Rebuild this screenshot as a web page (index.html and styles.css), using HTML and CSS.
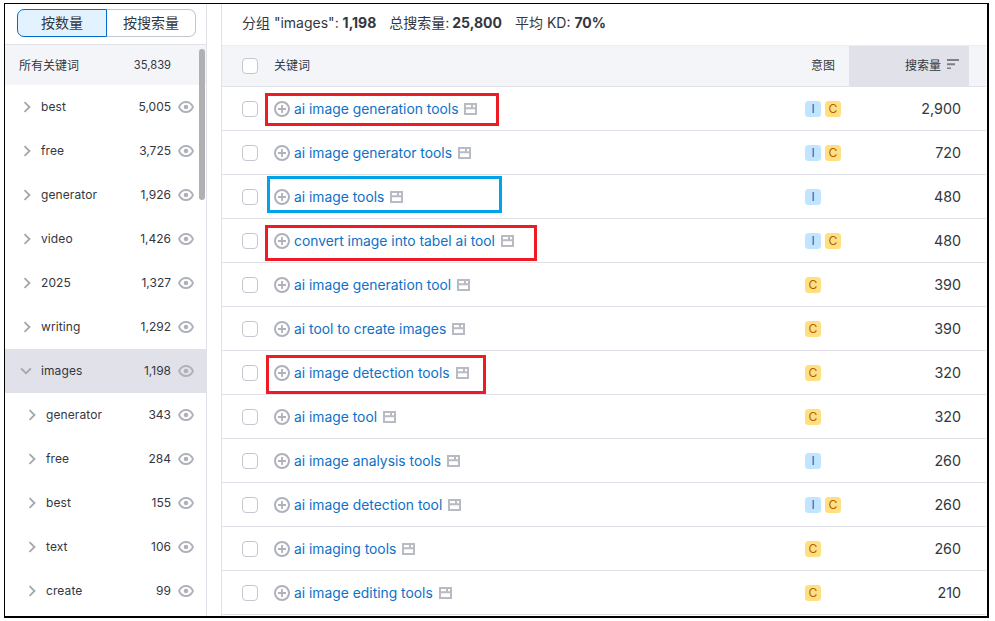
FILE: index.html
```html
<!DOCTYPE html>
<html lang="zh">
<head>
<meta charset="utf-8">
<title>分组 images</title>
<link rel="stylesheet" href="styles.css">
</head>
<body>
<svg class="defs" width="0" height="0">
  <symbol id="eye" viewBox="0 0 16 12"><path d="M1 6C2.500 2.800 5 1 8 1s5.500 1.800 7 5c-1.500 3.200-4 5-7 5S2.500 9.200 1 6z" fill="none" stroke="currentColor" stroke-width="1.800"/><circle cx="8" cy="6" r="2.300" fill="currentColor"/></symbol>
  <symbol id="right" viewBox="0 0 8 12"><path d="M1.500 1.200 6.500 6l-5 4.800" fill="none" stroke="currentColor" stroke-width="1.800"/></symbol>
  <symbol id="down" viewBox="0 0 12 8"><path d="M1.200 1.500 6 6.300l4.800-4.800" fill="none" stroke="currentColor" stroke-width="1.800"/></symbol>
  <symbol id="plus" viewBox="0 0 16 16"><circle cx="8" cy="8" r="7" fill="none" stroke="currentColor" stroke-width="2"/><path d="M8 4v8M4 8h8" fill="none" stroke="currentColor" stroke-width="1.800"/></symbol>
  <symbol id="serp" viewBox="0 0 13 12"><path d="M1 1h11v10H1zM1 5.200h11M8 1v4.200" fill="none" stroke="currentColor" stroke-width="2"/></symbol>
  <symbol id="sort" viewBox="0 0 12 10"><path d="M0 1h12M0 5.200h8M0 9.400h4" fill="none" stroke="currentColor" stroke-width="2"/></symbol>
</svg>
<div class="frame">
  <aside class="side">
    <div class="toggle-wrap">
      <div class="toggle">
        <span class="tab tab-on">按数量</span>
        <span class="tab">按搜索量</span>
      </div>
    </div>
    <div class="groups">
      <div class="scroll-thumb"></div>
      <div class="all"><span class="all-label">所有关键词</span><span class="all-num">35,839</span></div>
      <div class="group"><svg class="chev"><use href="#right"/></svg><span class="g-name">best</span><span class="g-num">5,005</span><svg class="eye"><use href="#eye"/></svg></div>
      <div class="group"><svg class="chev"><use href="#right"/></svg><span class="g-name">free</span><span class="g-num">3,725</span><svg class="eye"><use href="#eye"/></svg></div>
      <div class="group"><svg class="chev"><use href="#right"/></svg><span class="g-name">generator</span><span class="g-num">1,926</span><svg class="eye"><use href="#eye"/></svg></div>
      <div class="group"><svg class="chev"><use href="#right"/></svg><span class="g-name">video</span><span class="g-num">1,426</span><svg class="eye"><use href="#eye"/></svg></div>
      <div class="group"><svg class="chev"><use href="#right"/></svg><span class="g-name">2025</span><span class="g-num">1,327</span><svg class="eye"><use href="#eye"/></svg></div>
      <div class="group"><svg class="chev"><use href="#right"/></svg><span class="g-name">writing</span><span class="g-num">1,292</span><svg class="eye"><use href="#eye"/></svg></div>
      <div class="group group-on"><svg class="chev-down"><use href="#down"/></svg><span class="g-name">images</span><span class="g-num">1,198</span><svg class="eye"><use href="#eye"/></svg></div>
      <div class="group sub"><svg class="chev"><use href="#right"/></svg><span class="g-name">generator</span><span class="g-num">343</span><svg class="eye"><use href="#eye"/></svg></div>
      <div class="group sub"><svg class="chev"><use href="#right"/></svg><span class="g-name">free</span><span class="g-num">284</span><svg class="eye"><use href="#eye"/></svg></div>
      <div class="group sub"><svg class="chev"><use href="#right"/></svg><span class="g-name">best</span><span class="g-num">155</span><svg class="eye"><use href="#eye"/></svg></div>
      <div class="group sub"><svg class="chev"><use href="#right"/></svg><span class="g-name">text</span><span class="g-num">106</span><svg class="eye"><use href="#eye"/></svg></div>
      <div class="group sub"><svg class="chev"><use href="#right"/></svg><span class="g-name">create</span><span class="g-num">99</span><svg class="eye"><use href="#eye"/></svg></div>
    </div>
  </aside>
  <main class="main">
    <div class="summary">
      <span class="sum-first">分组 "images": <b>1,198</b></span>
      <span class="sum-tight">总搜索量: <b>25,800</b></span>
      <span>平均 KD: <b>70%</b></span>
    </div>
    <div class="thead">
      <span class="check"></span>
      <span class="th-kw">关键词</span>
      <span class="th-intent">意图</span>
      <span class="th-vol"><span class="th-label">搜索量</span><svg class="sort"><use href="#sort"/></svg></span>
      <span class="th-end"></span>
    </div>
    <div class="row">
      <span class="check"></span>
      <span class="kw"><svg class="plus"><use href="#plus"/></svg><a class="kw-link">ai image generation tools</a><svg class="serp"><use href="#serp"/></svg></span>
      <span class="intent"><i class="badge b-i">I</i><i class="badge b-c">C</i></span><span class="vol">2,900</span>
      <div class="mark mark-red mark-1"></div>
    </div>
    <div class="row">
      <span class="check"></span>
      <span class="kw"><svg class="plus"><use href="#plus"/></svg><a class="kw-link">ai image generator tools</a><svg class="serp"><use href="#serp"/></svg></span>
      <span class="intent"><i class="badge b-i">I</i><i class="badge b-c">C</i></span><span class="vol">720</span>
    </div>
    <div class="row">
      <span class="check"></span>
      <span class="kw"><svg class="plus"><use href="#plus"/></svg><a class="kw-link">ai image tools</a><svg class="serp"><use href="#serp"/></svg></span>
      <span class="intent"><i class="badge b-i">I</i></span><span class="vol">480</span>
      <div class="mark mark-blue mark-2"></div>
    </div>
    <div class="row">
      <span class="check"></span>
      <span class="kw"><svg class="plus"><use href="#plus"/></svg><a class="kw-link">convert image into tabel ai tool</a><svg class="serp"><use href="#serp"/></svg></span>
      <span class="intent"><i class="badge b-i">I</i><i class="badge b-c">C</i></span><span class="vol">480</span>
      <div class="mark mark-red mark-3"></div>
    </div>
    <div class="row">
      <span class="check"></span>
      <span class="kw"><svg class="plus"><use href="#plus"/></svg><a class="kw-link">ai image generation tool</a><svg class="serp"><use href="#serp"/></svg></span>
      <span class="intent"><i class="badge b-c">C</i></span><span class="vol">390</span>
    </div>
    <div class="row">
      <span class="check"></span>
      <span class="kw"><svg class="plus"><use href="#plus"/></svg><a class="kw-link">ai tool to create images</a><svg class="serp"><use href="#serp"/></svg></span>
      <span class="intent"><i class="badge b-c">C</i></span><span class="vol">390</span>
    </div>
    <div class="row">
      <span class="check"></span>
      <span class="kw"><svg class="plus"><use href="#plus"/></svg><a class="kw-link">ai image detection tools</a><svg class="serp"><use href="#serp"/></svg></span>
      <span class="intent"><i class="badge b-c">C</i></span><span class="vol">320</span>
      <div class="mark mark-red mark-4"></div>
    </div>
    <div class="row">
      <span class="check"></span>
      <span class="kw"><svg class="plus"><use href="#plus"/></svg><a class="kw-link">ai image tool</a><svg class="serp"><use href="#serp"/></svg></span>
      <span class="intent"><i class="badge b-c">C</i></span><span class="vol">320</span>
    </div>
    <div class="row">
      <span class="check"></span>
      <span class="kw"><svg class="plus"><use href="#plus"/></svg><a class="kw-link">ai image analysis tools</a><svg class="serp"><use href="#serp"/></svg></span>
      <span class="intent"><i class="badge b-i">I</i></span><span class="vol">260</span>
    </div>
    <div class="row">
      <span class="check"></span>
      <span class="kw"><svg class="plus"><use href="#plus"/></svg><a class="kw-link">ai image detection tool</a><svg class="serp"><use href="#serp"/></svg></span>
      <span class="intent"><i class="badge b-i">I</i><i class="badge b-c">C</i></span><span class="vol">260</span>
    </div>
    <div class="row">
      <span class="check"></span>
      <span class="kw"><svg class="plus"><use href="#plus"/></svg><a class="kw-link">ai imaging tools</a><svg class="serp"><use href="#serp"/></svg></span>
      <span class="intent"><i class="badge b-c">C</i></span><span class="vol">260</span>
    </div>
    <div class="row">
      <span class="check"></span>
      <span class="kw"><svg class="plus"><use href="#plus"/></svg><a class="kw-link">ai image editing tools</a><svg class="serp"><use href="#serp"/></svg></span>
      <span class="intent"><i class="badge b-c">C</i></span><span class="vol">210</span>
    </div>
  </main>
</div>
</body>
</html>
```

FILE: styles.css
```css
* { box-sizing: border-box; }
html, body { margin: 0; height: 100%; background: #fff; overflow: hidden; }
body { padding: 3px 6px 3px 4px; font-family: Inter, "Noto Sans CJK SC", sans-serif; color: #333740; }
.defs { display: block; height: 0; }
.frame { display: flex; height: 615px; border: solid #000; border-width: 1px 2px 2px 1px; background: #fff; overflow: hidden; }

.side { width: 202px; flex: none; border-right: 1px solid #e0e1e9; display: flex; flex-direction: column; overflow: hidden; }
.toggle-wrap { height: 41px; flex: none; padding: 5px 10px 0 12px; border-bottom: 1px solid #e0e1e9; }
.toggle { display: flex; height: 28px; width: 179px; font-size: 14px; line-height: 26px; color: #333740; }
.tab { flex: 1; text-align: center; border: 1px solid #c4c7cf; border-left: 0; border-radius: 0 7px 7px 0; }
.tab-on { flex: none; width: 90px; background: #e3f2ff; border: 1px solid #006dca; border-radius: 7px 0 0 7px; }

.groups { position: relative; flex: 1; overflow: hidden; }
.scroll-thumb { position: absolute; top: 4px; right: 1px; width: 6px; height: 151px; border-radius: 3px; background: #b0b0b2; z-index: 2; }
.all { height: 40px; display: flex; align-items: center; justify-content: space-between; padding: 0 35px 0 14px; background: #f4f5f9; font-size: 12px; }
.all-label { margin-bottom: 2px; }
.all-num { font-size: 11.200px; margin-bottom: 1px; }
.group { height: 44px; display: flex; align-items: center; padding: 0 12px 0 18px; font-size: 12px; }
.group-on { background: #e0e1e9; }
.sub { padding-left: 23px; }
.chev { width: 8px; height: 12px; color: #a4a6b0; flex: none; margin-right: 10px; }
.chev-down { width: 12px; height: 8px; color: #a4a6b0; flex: none; margin-left: -3px; margin-right: 9px; }
.g-name { flex: 1; letter-spacing: .1px; margin-bottom: 2px; }
.g-num { margin: 0 7px 2px 0; }
.eye { width: 16px; height: 12px; color: #b0b2bb; flex: none; }

.main { flex: 1; margin-left: 14px; margin-right: 1px; border-left: 1px solid #e0e1e9; display: flex; flex-direction: column; overflow: hidden; }
.summary { height: 41px; flex: none; display: flex; align-items: center; gap: 12px; padding: 0 0 6px 20px; font-size: 14px; color: #333740; }
.summary b { font-weight: 700; }
.sum-first { margin-right: 1px; }
.sum-tight { word-spacing: -1px; margin-right: 1px; }
.thead { height: 42px; flex: none; display: flex; align-items: center; background: #f4f5f9; border-top: 1px solid #eceef2; border-bottom: 1px solid #e0e1e9; font-size: 12px; color: #333740; padding-left: 20px; }
.check { width: 16px; height: 16px; flex: none; border: 1px solid #c4c7cf; border-radius: 4px; background: #fff; margin-right: 16px; }
.th-kw { flex: 1; margin-bottom: 4px; }
.th-intent { width: 38px; margin-bottom: 4px; }
.th-vol { width: 120px; height: 100%; background: #e0e1e9; display: flex; align-items: center; justify-content: flex-end; gap: 6px; padding: 0 10px 4px 0; font-size: 12px; }
.th-end { width: 17px; }
.sort { width: 12px; height: 10px; color: #7d8088; }

.row { position: relative; height: 44px; flex: none; display: flex; align-items: center; border-bottom: 1px solid #e0e1e9; padding-left: 20px; }
.kw { flex: 1; display: flex; align-items: center; font-size: 13.850px; }
.plus { width: 16px; height: 16px; color: #b0b2bb; flex: none; margin-right: 4px; }
.kw-link { color: #0e71c8; }
.serp { width: 13px; height: 12px; color: #b8bac4; flex: none; margin-left: 6px; }
.intent { width: 48px; display: flex; gap: 4px; flex: none; }
.badge { width: 16px; height: 16px; border-radius: 3.500px; font-style: normal; font-size: 12px; line-height: 16px; text-align: center; }
.b-i { background: #c2e5ff; color: #006dca; }
.b-c { background: #ffdf80; color: #b35f00; }
.vol { width: 133px; flex: none; text-align: right; padding-right: 25px; font-size: 14.300px; }

.mark { position: absolute; border-style: solid; border-width: 3px; pointer-events: none; }
.mark-red { border-color: #ed1c24; }
.mark-blue { border-color: #00a2e8; }
.mark-1 { left: 43px; top: 6px; width: 234px; height: 33px; }
.mark-2 { left: 45px; top: 1px; width: 235px; height: 37px; }
.mark-3 { left: 43px; top: 6px; width: 272px; height: 36px; }
.mark-4 { left: 44px; top: 4px; width: 220px; height: 39px; }
```
